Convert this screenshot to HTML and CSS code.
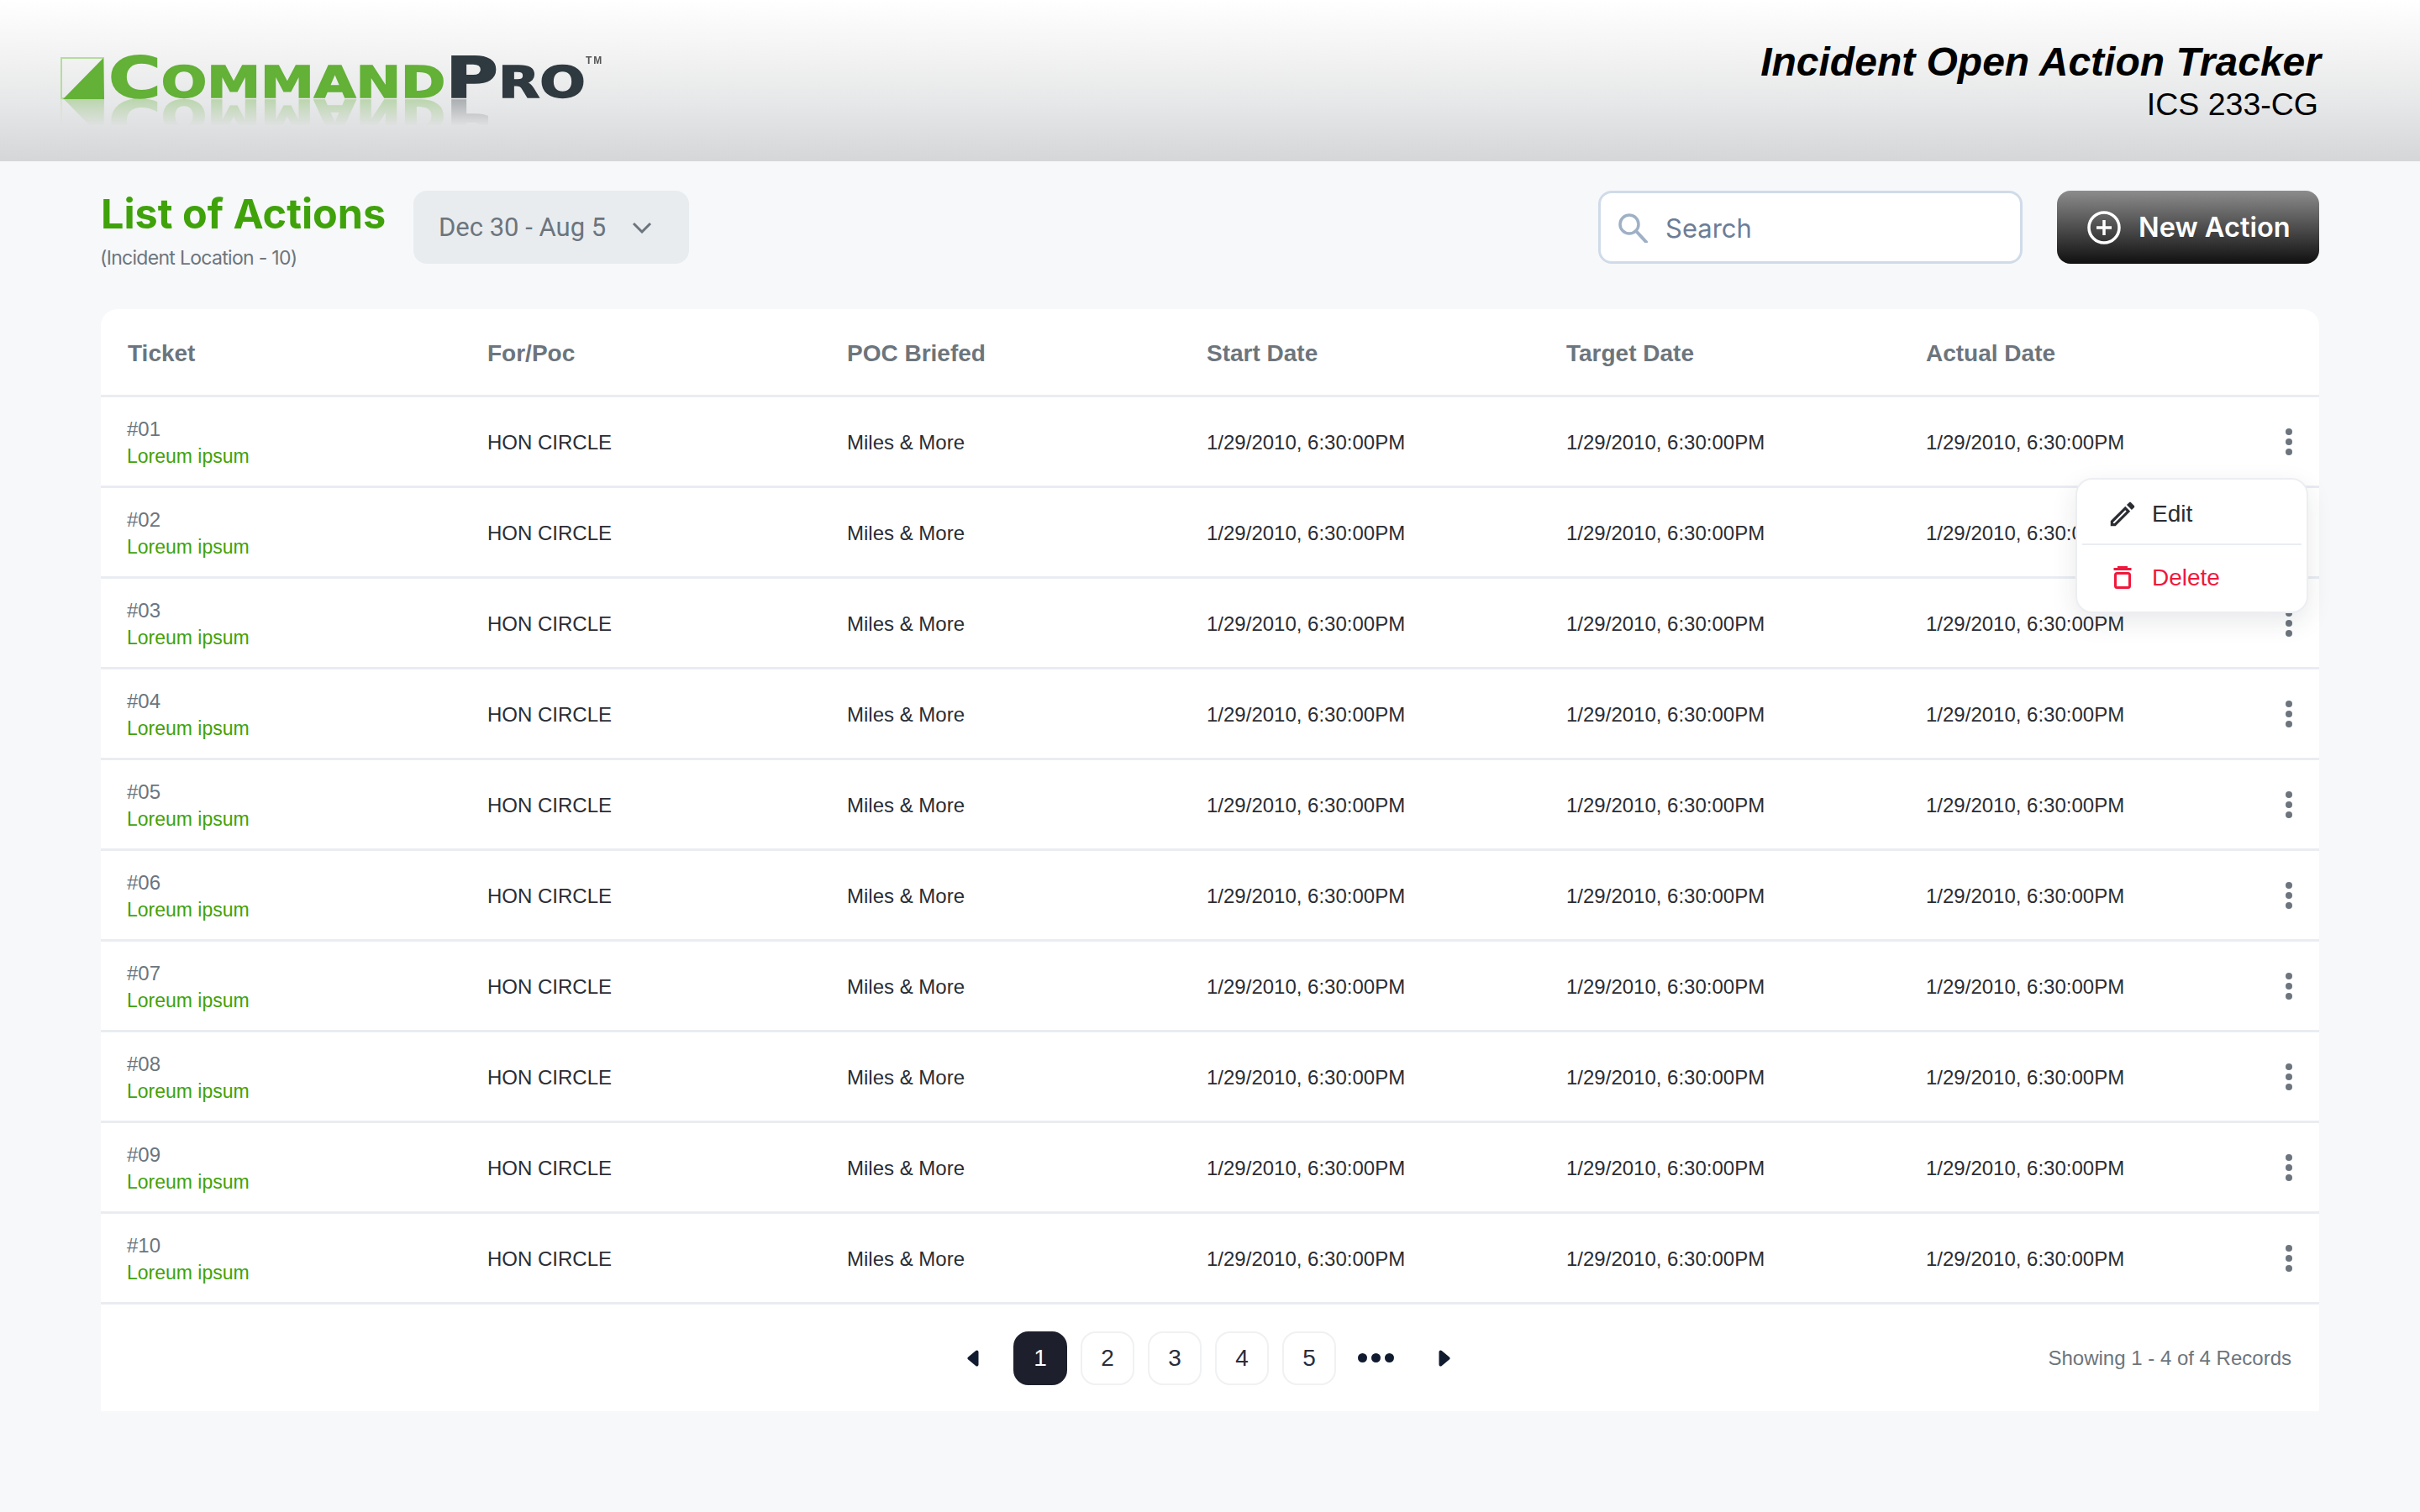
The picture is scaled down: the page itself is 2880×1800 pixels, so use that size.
FILE: index.html
```html
<!DOCTYPE html>
<html lang="en">
<head>
    <meta charset="UTF-8">
    <meta name="viewport" content="width=device-width, initial-scale=1.0">
    <title>Incident Open Action Tracker</title>
    <link rel="stylesheet" href="styles.css">
</head>
<body>
    <header class="top-bar">
        <div class="logo">
            <svg class="logo-mark" width="52" height="50" viewBox="0 0 52 50">
                <rect x="1" y="1" width="50" height="48" fill="none" stroke="#b5dc9f" stroke-width="2"/>
                <polygon points="3,50 51,1 52,50" fill="#63b137"/>
            </svg>
            <div class="logo-word"><span class="logo-big">C</span>ommand<span class="logo-pro"><span class="logo-big">P</span>ro</span></div>
            <span class="logo-tm">TM</span>
        </div>
        <div class="top-title">
            <h1>Incident Open Action Tracker</h1>
            <p>ICS 233-CG</p>
        </div>
    </header>

    <main class="content">
        <section class="toolbar">
            <div class="list-title">
                <h2>List of Actions</h2>
                <p>(Incident Location - 10)</p>
            </div>
            <button type="button" class="date-pill">
                Dec 30 - Aug 5
                <svg width="24" height="14" viewBox="0 0 24 14"><path d="M2 2l10 10L22 2" fill="none" stroke="#6c757d" stroke-width="3"/></svg>
            </button>
            <label class="search">
                <svg width="36" height="36" viewBox="0 0 36 36"><circle cx="14" cy="14" r="11" fill="none" stroke="#9fb0c6" stroke-width="3.5"/><path d="M22 22l12 13" stroke="#9fb0c6" stroke-width="4" stroke-linecap="round"/></svg>
                <input type="text" placeholder="Search">
            </label>
            <button type="button" class="new-action">
                <svg width="40" height="40" viewBox="0 0 40 40"><circle cx="20" cy="20" r="18" fill="none" stroke="#fff" stroke-width="3.5"/><path d="M20 11v18M11 20h18" stroke="#fff" stroke-width="3.5"/></svg>
                New Action
            </button>
        </section>

        <section class="card">
            <table class="actions">
                <thead>
                    <tr><th>Ticket</th><th>For/Poc</th><th>POC Briefed</th><th>Start Date</th><th>Target Date</th><th>Actual Date</th><th></th></tr>
                </thead>
                <tbody>
                    <tr><td><span class="num">#01</span><span class="name">Loreum ipsum</span></td><td>HON CIRCLE</td><td>Miles &amp; More</td><td>1/29/2010, 6:30:00PM</td><td>1/29/2010, 6:30:00PM</td><td>1/29/2010, 6:30:00PM</td><td><span class="kebab"><i></i><i></i><i></i></span></td></tr>
                    <tr><td><span class="num">#02</span><span class="name">Loreum ipsum</span></td><td>HON CIRCLE</td><td>Miles &amp; More</td><td>1/29/2010, 6:30:00PM</td><td>1/29/2010, 6:30:00PM</td><td>1/29/2010, 6:30:00PM</td><td><span class="kebab"><i></i><i></i><i></i></span></td></tr>
                    <tr><td><span class="num">#03</span><span class="name">Loreum ipsum</span></td><td>HON CIRCLE</td><td>Miles &amp; More</td><td>1/29/2010, 6:30:00PM</td><td>1/29/2010, 6:30:00PM</td><td>1/29/2010, 6:30:00PM</td><td><span class="kebab"><i></i><i></i><i></i></span></td></tr>
                    <tr><td><span class="num">#04</span><span class="name">Loreum ipsum</span></td><td>HON CIRCLE</td><td>Miles &amp; More</td><td>1/29/2010, 6:30:00PM</td><td>1/29/2010, 6:30:00PM</td><td>1/29/2010, 6:30:00PM</td><td><span class="kebab"><i></i><i></i><i></i></span></td></tr>
                    <tr><td><span class="num">#05</span><span class="name">Loreum ipsum</span></td><td>HON CIRCLE</td><td>Miles &amp; More</td><td>1/29/2010, 6:30:00PM</td><td>1/29/2010, 6:30:00PM</td><td>1/29/2010, 6:30:00PM</td><td><span class="kebab"><i></i><i></i><i></i></span></td></tr>
                    <tr><td><span class="num">#06</span><span class="name">Loreum ipsum</span></td><td>HON CIRCLE</td><td>Miles &amp; More</td><td>1/29/2010, 6:30:00PM</td><td>1/29/2010, 6:30:00PM</td><td>1/29/2010, 6:30:00PM</td><td><span class="kebab"><i></i><i></i><i></i></span></td></tr>
                    <tr><td><span class="num">#07</span><span class="name">Loreum ipsum</span></td><td>HON CIRCLE</td><td>Miles &amp; More</td><td>1/29/2010, 6:30:00PM</td><td>1/29/2010, 6:30:00PM</td><td>1/29/2010, 6:30:00PM</td><td><span class="kebab"><i></i><i></i><i></i></span></td></tr>
                    <tr><td><span class="num">#08</span><span class="name">Loreum ipsum</span></td><td>HON CIRCLE</td><td>Miles &amp; More</td><td>1/29/2010, 6:30:00PM</td><td>1/29/2010, 6:30:00PM</td><td>1/29/2010, 6:30:00PM</td><td><span class="kebab"><i></i><i></i><i></i></span></td></tr>
                    <tr><td><span class="num">#09</span><span class="name">Loreum ipsum</span></td><td>HON CIRCLE</td><td>Miles &amp; More</td><td>1/29/2010, 6:30:00PM</td><td>1/29/2010, 6:30:00PM</td><td>1/29/2010, 6:30:00PM</td><td><span class="kebab"><i></i><i></i><i></i></span></td></tr>
                    <tr><td><span class="num">#10</span><span class="name">Loreum ipsum</span></td><td>HON CIRCLE</td><td>Miles &amp; More</td><td>1/29/2010, 6:30:00PM</td><td>1/29/2010, 6:30:00PM</td><td>1/29/2010, 6:30:00PM</td><td><span class="kebab"><i></i><i></i><i></i></span></td></tr>
                </tbody>
            </table>

            <div class="row-menu">
                <div class="menu-item menu-edit">
                    <svg width="38" height="38" viewBox="0 0 24 24" fill="#2b2d33"><path d="M3 17.25V21h3.75L17.81 9.94l-3.75-3.75L3 17.25zM5.92 19H5v-.92l9.06-9.06.92.92L5.92 19z"/><path d="M20.71 5.63l-2.34-2.34c-.2-.2-.45-.29-.71-.29s-.51.1-.7.29l-1.83 1.83 3.75 3.75 1.83-1.83c.39-.39.39-1.02 0-1.41z"/></svg>
                    Edit
                </div>
                <div class="menu-item menu-delete">
                    <svg width="32" height="32" viewBox="0 0 32 32" fill="none" stroke="#f0183c" stroke-width="3"><path d="M5.500 5.500h21M10 3.500h12"/><rect x="7.500" y="10.500" width="17" height="17" rx="2"/></svg>
                    Delete
                </div>
            </div>

            <footer class="card-foot">
                <div class="pager">
                    <svg class="pager-arrow" width="14" height="20" viewBox="0 0 14 20"><path d="M11.500 2.500L2.500 10l9 7.500z" fill="#111b30" stroke="#111b30" stroke-width="4" stroke-linejoin="round"/></svg>
                    <span class="page page-on">1</span>
                    <span class="page">2</span>
                    <span class="page">3</span>
                    <span class="page">4</span>
                    <span class="page">5</span>
                    <span class="pager-dots"><i></i><i></i><i></i></span>
                    <svg class="pager-arrow" width="14" height="20" viewBox="0 0 14 20"><path d="M2.500 2.500l9 7.500-9 7.500z" fill="#111b30" stroke="#111b30" stroke-width="4" stroke-linejoin="round"/></svg>
                </div>
                <p class="records">Showing 1 - 4 of 4 Records</p>
            </footer>
        </section>
    </main>
</body>
</html>
```

FILE: styles.css
```css
* {
    box-sizing: border-box;
}
body {
    font-family: "Liberation Sans", Arial, sans-serif;
    background-color: #f7f8fa;
    color: #2b2d33;
    margin: 0;
    min-height: 1800px;
}
h1, h2, p {
    margin: 0;
}

/* top bar */
.top-bar {
    height: 192px;
    display: flex;
    justify-content: space-between;
    padding: 46px 118px 0 72px;
    background: linear-gradient(#ffffff 0%, #f6f6f6 25%, #e6e7e8 65%, #d5d6d8 100%);
}
.logo {
    display: flex;
    align-items: flex-start;
    height: 50px;
    margin-top: 22px;
    position: relative;
    -webkit-box-reflect: below -1px linear-gradient(transparent 35%, rgba(255, 255, 255, 0.35));
}
.logo-mark {
    flex: none;
}
.logo-word {
    margin-left: 5px;
    font-family: "DejaVu Sans", sans-serif;
    font-weight: 700;
    font-size: 51px;
    line-height: 50px;
    height: 50px;
    text-transform: uppercase;
    color: #63b137;
    -webkit-text-stroke: 1.5px currentColor;
    white-space: nowrap;
    transform: scaleX(1.257);
    transform-origin: left center;
}
.logo-big {
    font-size: 68px;
}
.logo-pro {
    color: #2f3a40;
}
.logo-tm {
    position: absolute;
    left: 625px;
    top: -3px;
    font-size: 12px;
    font-weight: 700;
    color: #555;
    letter-spacing: 2px;
}
.top-title {
    text-align: right;
}
.top-title h1 {
    font-size: 48px;
    line-height: 56px;
    font-weight: 700;
    font-style: italic;
    color: #000;
}
.top-title p {
    font-size: 37.5px;
    line-height: 44px;
    margin-top: 0;
    padding-right: 3px;
    color: #000;
}

/* toolbar */
.content {
    padding: 35px 120px 0;
}
.toolbar {
    display: flex;
    align-items: flex-start;
    height: 87px;
}
.list-title {
    width: 372px;
}
.list-title h2 {
    font-family: Inter, sans-serif;
    font-size: 48.5px;
    line-height: 56px;
    font-weight: 700;
    color: #3fa20a;
}
.list-title p {
    font-family: Inter, sans-serif;
    font-size: 23px;
    line-height: 28px;
    letter-spacing: -0.7px;
    margin: 10px 0 0 -1px;
    color: #6c757d;
}
.date-pill {
    width: 328px;
    height: 87px;
    display: flex;
    align-items: center;
    justify-content: space-between;
    padding: 0 44px 0 30px;
    border: none;
    border-radius: 16px;
    background-color: #e9ecef;
    font-family: Roboto, sans-serif;
    font-size: 31px;
    color: #6c757d;
    white-space: nowrap;
}
.search {
    margin-left: auto;
    width: 505px;
    height: 87px;
    display: flex;
    align-items: center;
    gap: 21px;
    padding: 0 20px;
    background-color: #fff;
    border: 3px solid #d0dbe9;
    border-radius: 16px;
}
.search input {
    flex: 1;
    min-width: 0;
    padding: 2px 0 0;
    border: none;
    outline: none;
    font-family: Inter, sans-serif;
    font-size: 31px;
    color: #6c7d96;
}
.search input::placeholder {
    color: #6c7d96;
    opacity: 1;
}
.new-action {
    margin-left: 41px;
    width: 312px;
    height: 87px;
    display: flex;
    align-items: center;
    gap: 21px;
    padding: 0 20px 0 36px;
    border: none;
    border-radius: 16px;
    background: linear-gradient(#8c8c8c, #101010);
    font-family: Inter, sans-serif;
    font-size: 32.5px;
    font-weight: 600;
    color: #fff;
    white-space: nowrap;
}
.new-action svg {
    flex: none;
}

/* table card */
.card {
    position: relative;
    margin-top: 54px;
    height: 1312px;
    background-color: #fff;
    border-radius: 20px 20px 0 0;
}
.actions {
    width: 100%;
    table-layout: fixed;
    border-collapse: separate;
    border-spacing: 0;
}
.actions th,
.actions td {
    width: 428px;
    padding: 2px 0 0 32px;
    text-align: left;
    border-bottom: 3px solid #e9edf2;
}
.actions th:last-child,
.actions td:last-child {
    width: 72px;
    padding: 0;
}
.actions th {
    height: 105px;
    padding-top: 3px;
    font-size: 28px;
    font-weight: 700;
    color: #6c757d;
}
.actions td {
    height: 108px;
    font-size: 24px;
    color: #2b2d33;
}
.num {
    display: block;
    margin-left: -1px;
    line-height: 32px;
    color: #6c757d;
}
.name {
    display: block;
    margin-left: -1px;
    font-size: 23px;
    line-height: 32px;
    color: #3fa20a;
}
.kebab {
    display: flex;
    flex-direction: column;
    align-items: center;
    gap: 4px;
}
.kebab i {
    width: 8px;
    height: 8px;
    border-radius: 50%;
    background-color: #6c757d;
}

/* row popup */
.row-menu {
    position: absolute;
    top: 201px;
    right: 13px;
    width: 277px;
    height: 161px;
    padding: 0 6px;
    background-color: #fff;
    border: 2px solid #eceef1;
    border-radius: 20px;
    box-shadow: 0 10px 30px rgba(30, 40, 60, 0.1);
}
.menu-item {
    height: 78px;
    display: flex;
    align-items: center;
    gap: 19px;
    padding: 0 32px;
    font-size: 28px;
    color: #2b2d33;
}
.menu-edit {
    padding-top: 6px;
    border-bottom: 2px solid #e9edf2;
}
.menu-edit svg {
    margin: 0 -3px;
}
.menu-delete {
    color: #f0183c;
}

/* pager + records */
.card-foot {
    height: 127px;
    display: grid;
    grid-template-columns: 1fr auto 1fr;
    align-items: center;
}
.pager {
    grid-column: 2;
    display: flex;
    align-items: center;
    gap: 16px;
    margin-right: 3px;
}
.pager-arrow:first-child {
    margin-right: 25px;
}
.pager-arrow:last-child {
    margin-left: 37px;
}
.page {
    width: 64px;
    height: 64px;
    display: flex;
    align-items: center;
    justify-content: center;
    border: 2px solid #f0f1f3;
    border-radius: 18px;
    font-size: 28px;
    color: #2a2d3a;
}
.page-on {
    background-color: #1d202c;
    border-color: #1d202c;
    color: #fff;
}
.pager-dots {
    display: flex;
    gap: 5px;
    margin-left: 10px;
}
.pager-dots i {
    width: 11px;
    height: 11px;
    border-radius: 50%;
    background-color: #111b30;
}
.records {
    justify-self: end;
    padding-right: 33px;
    font-size: 24px;
    color: #6c757d;
}
```
